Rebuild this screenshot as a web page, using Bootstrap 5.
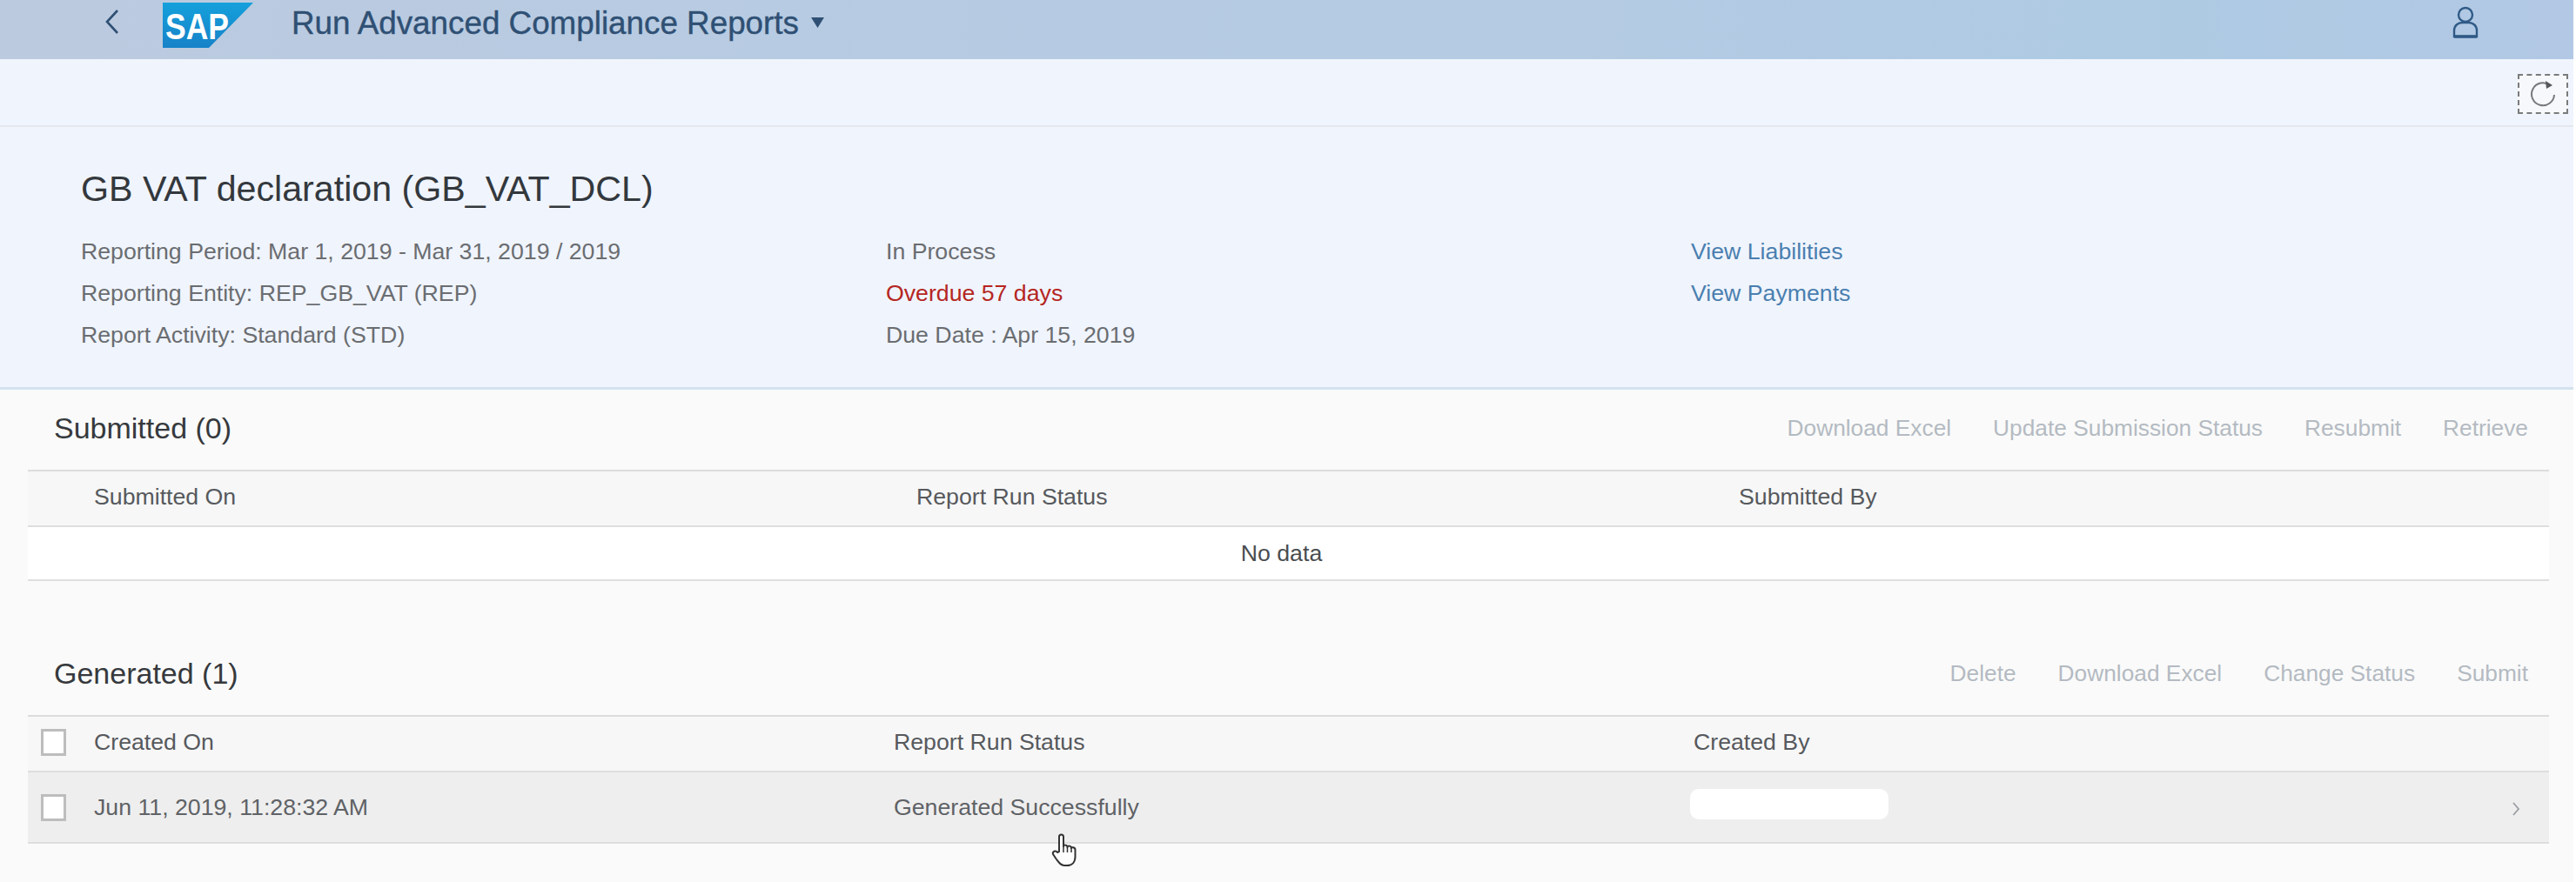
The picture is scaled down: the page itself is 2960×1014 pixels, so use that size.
<!DOCTYPE html>
<html lang="en">
<head>
    <meta charset="UTF-8">
    <title>Run Advanced Compliance Reports</title>
    <meta name="viewport" content="width=device-width, initial-scale=1">
    <link href="https://cdn.jsdelivr.net/npm/bootstrap@5.3.2/dist/css/bootstrap.min.css" rel="stylesheet">
    <style>
        html, body { height: 100%; overflow: hidden; background: #fff; }
        body { font-family: "Liberation Sans", Arial, sans-serif; font-size: 26.7px; color: #6a6d71; }
        .app-shell { width: 2957px; height: 1014px; position: relative; background: #fafafa; }

        .shell-bar { height: 68px; padding: 0; background: linear-gradient(90deg, #bccadf 0%, #b7cbe2 30%, #b4cbe3 60%, #aecae3 85%, #b2c8e4 100%); }
        .shell-back { margin-left: 119px; width: 19px; height: 30px; margin-top: -18px; }
        .shell-logo { margin-left: 49px; width: 104px; height: 52px; margin-top: -10px; }
        .shell-title { margin-left: 44px; margin-top: -14px; font-size: 36.8px; color: #2f5074; -webkit-text-stroke: .4px #2f5074; line-height: 1; white-space: nowrap; }
        .shell-caret { margin-left: 14px; margin-top: -16px; width: 15px; height: 12px; }
        .shell-user { margin-right: 109px; margin-top: -16px; width: 30px; height: 38px; }

        .tool-strip { height: 78px; background: #f0f4fc; border-bottom: 2px solid #e4e8ee; padding: 17px 6px 0 0; }
        .refresh-box { width: 58px; height: 46px; border: 2px dashed #7b7b7b; background: #f6f8fc; padding: 0; }

        .head-panel { height: 302px; background: #f0f4fc; border-bottom: 3px solid #d4e2ee; padding: 48px 89px 0 93px; }
        .report-title { font-size: 41.2px; line-height: 46px; color: #33383d; font-weight: 400; margin: 0 0 25px; }
        .meta-line { height: 48px; line-height: 48px; white-space: nowrap; }
        .meta-red { color: #b5261f; }
        .meta-link { color: #4a7fb0; text-decoration: none; }

        .sect-head { height: 92px; padding: 0 24px 3px 30px; margin-left: 32px; margin-right: 28px; }
        .sect-title { font-size: 34px; color: #36393d; font-weight: 400; margin: 0; }
        .sect-gap { margin-top: 62px; }
        .act-btn { --bs-btn-disabled-color: #b4bac2; font-size: 26.3px; padding: 0; border: 0; background: none; opacity: 1 !important; }

        .grid-wrap { margin: 0 28px 0 32px; }
        .grid-tbl { table-layout: fixed; width: 100%; margin: 0; border-top: 2px solid #dcdcdc; font-size: 26.7px; }
        .grid-tbl > :not(caption) > * > * { background: transparent; box-shadow: none; border-bottom: 2px solid #dedede; padding: 0; vertical-align: middle; color: #5f6266; font-weight: 400; }
        .grid-tbl thead tr { height: 64px; background: #f7f7f7; }
        .grid-tbl > thead > tr > th { color: #56595d; padding-bottom: 3px; }
        .row-empty { height: 62px; background: #fff; }
        .grid-tbl .row-empty td { color: #4a4d50; text-align: center; padding-right: 16px; }
        .row-hover { height: 82px; background: #eeeeee; }
        .w-sel { width: 76px; }
        .w-col-s { width: 945px; }
        .w-col-g { width: 919px; }
        .w-chev { width: 56px; }
        .grid-tbl td.chev-cell { text-align: right; padding-right: 33px; }
        .sel-box { display: block; margin-left: 15px; width: 29px; height: 31px; border: 3px solid #bdbdbd; background: #fff; }
        .blur-name { width: 228px; height: 35px; background: #fff; border-radius: 10px; margin: -8px 0 0 -4px; }
        .hand-cursor { position: absolute; left: 1208px; top: 957px; width: 30px; height: 40px; }
    </style>
</head>
<body>
<div class="app-shell">

    <nav class="navbar shell-bar flex-nowrap justify-content-start">
        <svg class="shell-back" viewBox="0 0 19 30"><path d="M16 2 L4 15 L16 28" fill="none" stroke="#2f5074" stroke-width="2.6"/></svg>
        <svg class="shell-logo" viewBox="0 0 104 52">
            <defs><linearGradient id="sapBlue" x1="0" y1="0" x2="0" y2="1"><stop offset="0" stop-color="#15a0dc"/><stop offset="1" stop-color="#1782c8"/></linearGradient></defs>
            <polygon points="0,0 104,0 53,52 0,52" fill="url(#sapBlue)"/>
            <text x="3" y="42" font-family="Liberation Sans" font-weight="700" font-size="42" textLength="73" lengthAdjust="spacingAndGlyphs" fill="#fff">SAP</text>
        </svg>
        <span class="shell-title">Run Advanced Compliance Reports</span>
        <svg class="shell-caret" viewBox="0 0 15 12"><polygon points="0,0 15,0 7.5,12" fill="#2f5074"/></svg>
        <svg class="shell-user ms-auto" viewBox="0 0 30 38" fill="none" stroke="#2f5a86" stroke-width="2.4">
            <circle cx="15" cy="10" r="8"/>
            <path d="M2 35 V28 C2 22 7 19 11 19 H19 C23 19 28 22 28 28 V35 Z"/>
            <path d="M2 35 H28" stroke-width="3.5"/>
        </svg>
    </nav>

    <div class="tool-strip d-flex justify-content-end">
        <button type="button" class="btn refresh-box rounded-0 d-flex align-items-center justify-content-center">
            <svg width="32" height="32" viewBox="0 0 32 32" fill="none" stroke="#77797c" stroke-width="2">
                <path d="M24 6 A13 13 0 1 0 29 17"/>
                <polygon points="19,1 27,6 20,10" fill="#55575a" stroke="none"/>
            </svg>
        </button>
    </div>

    <header class="head-panel">
        <h1 class="report-title">GB VAT declaration (GB_VAT_DCL)</h1>
        <div class="row g-0">
            <div class="col-4">
                <div class="meta-line">Reporting Period: Mar 1, 2019 - Mar 31, 2019 / 2019</div>
                <div class="meta-line">Reporting Entity: REP_GB_VAT (REP)</div>
                <div class="meta-line">Report Activity: Standard (STD)</div>
            </div>
            <div class="col-4">
                <div class="meta-line">In Process</div>
                <div class="meta-line meta-red">Overdue 57 days</div>
                <div class="meta-line">Due Date : Apr 15, 2019</div>
            </div>
            <div class="col-4">
                <div class="meta-line"><a class="meta-link" href="#">View Liabilities</a></div>
                <div class="meta-line"><a class="meta-link" href="#">View Payments</a></div>
            </div>
        </div>
    </header>

    <section>
        <div class="sect-head d-flex align-items-center justify-content-between">
            <h2 class="sect-title">Submitted (0)</h2>
            <div class="d-flex gap-5">
                <button type="button" class="btn act-btn" disabled>Download Excel</button>
                <button type="button" class="btn act-btn" disabled>Update Submission Status</button>
                <button type="button" class="btn act-btn" disabled>Resubmit</button>
                <button type="button" class="btn act-btn" disabled>Retrieve</button>
            </div>
        </div>
        <div class="grid-wrap">
            <table class="table grid-tbl">
                <colgroup><col class="w-sel"><col class="w-col-s"><col class="w-col-s"><col></colgroup>
                <thead>
                    <tr><th></th><th>Submitted On</th><th>Report Run Status</th><th>Submitted By</th></tr>
                </thead>
                <tbody>
                    <tr class="row-empty"><td colspan="4">No data</td></tr>
                </tbody>
            </table>
        </div>
    </section>

    <section class="sect-gap">
        <div class="sect-head d-flex align-items-center justify-content-between">
            <h2 class="sect-title">Generated (1)</h2>
            <div class="d-flex gap-5">
                <button type="button" class="btn act-btn" disabled>Delete</button>
                <button type="button" class="btn act-btn" disabled>Download Excel</button>
                <button type="button" class="btn act-btn" disabled>Change Status</button>
                <button type="button" class="btn act-btn" disabled>Submit</button>
            </div>
        </div>
        <div class="grid-wrap">
            <table class="table grid-tbl">
                <colgroup><col class="w-sel"><col class="w-col-g"><col class="w-col-g"><col><col class="w-chev"></colgroup>
                <thead>
                    <tr><th><span class="sel-box"></span></th><th>Created On</th><th>Report Run Status</th><th>Created By</th><th></th></tr>
                </thead>
                <tbody>
                    <tr class="row-hover">
                        <td><span class="sel-box"></span></td>
                        <td>Jun 11, 2019, 11:28:32 AM</td>
                        <td>Generated Successfully</td>
                        <td><div class="blur-name"></div></td>
                        <td class="chev-cell">
                            <svg width="10" height="20" viewBox="0 0 10 20"><path d="M2 3 L8 10 L2 17" fill="none" stroke="#9a9ea3" stroke-width="1.8"/></svg>
                        </td>
                    </tr>
                </tbody>
            </table>
        </div>
    </section>

    <svg class="hand-cursor" viewBox="0 0 30 40">
        <path d="M9 22 V5 C9 1.5 14 1.5 14 5 V16 C14 14 18.5 14 18.5 17 C18.5 15 23 15 23 18 C23 16.5 27.5 17 27.5 20 V28 C27.5 34 24 38 18 38 H15 C11 38 9 35 6 31 L2 25 C1 22 5 20 7 23 Z" fill="#fff" stroke="#333" stroke-width="2" stroke-linejoin="round"/>
        <path d="M14 16 V23 M18.5 17 V23 M23 18 V23" stroke="#333" stroke-width="1.5" fill="none"/>
    </svg>
</div>

<script src="https://cdn.jsdelivr.net/npm/bootstrap@5.3.2/dist/js/bootstrap.bundle.min.js"></script>
</body>
</html>
